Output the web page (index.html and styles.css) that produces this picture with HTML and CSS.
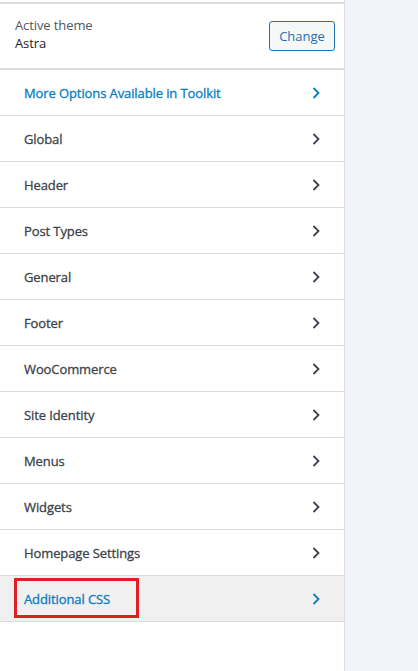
FILE: index.html
```html
<!DOCTYPE html>
<html>
<head>
<meta charset="utf-8">
<link rel="stylesheet" href="styles.css">
</head>
<body>
<div class="app">
  <aside class="sidebar">
    <div class="info">
      <div class="theme">
        <div class="label">Active theme</div>
        <div class="name">Astra</div>
      </div>
      <button class="change">Change</button>
    </div>
    <ul class="panels">
      <li class="panel link"><span>More Options Available in Toolkit</span><svg class="chev" viewBox="0 0 8 12" width="8" height="12"><polyline points="1.5,1 6.5,6 1.5,11"/></svg></li>
      <li class="panel"><span>Global</span><svg class="chev" viewBox="0 0 8 12" width="8" height="12"><polyline points="1.5,1 6.5,6 1.5,11"/></svg></li>
      <li class="panel"><span>Header</span><svg class="chev" viewBox="0 0 8 12" width="8" height="12"><polyline points="1.5,1 6.5,6 1.5,11"/></svg></li>
      <li class="panel"><span>Post Types</span><svg class="chev" viewBox="0 0 8 12" width="8" height="12"><polyline points="1.5,1 6.5,6 1.5,11"/></svg></li>
      <li class="panel"><span>General</span><svg class="chev" viewBox="0 0 8 12" width="8" height="12"><polyline points="1.5,1 6.5,6 1.5,11"/></svg></li>
      <li class="panel"><span>Footer</span><svg class="chev" viewBox="0 0 8 12" width="8" height="12"><polyline points="1.5,1 6.5,6 1.5,11"/></svg></li>
      <li class="panel"><span>WooCommerce</span><svg class="chev" viewBox="0 0 8 12" width="8" height="12"><polyline points="1.5,1 6.5,6 1.5,11"/></svg></li>
      <li class="panel"><span>Site Identity</span><svg class="chev" viewBox="0 0 8 12" width="8" height="12"><polyline points="1.5,1 6.5,6 1.5,11"/></svg></li>
      <li class="panel"><span>Menus</span><svg class="chev" viewBox="0 0 8 12" width="8" height="12"><polyline points="1.5,1 6.5,6 1.5,11"/></svg></li>
      <li class="panel"><span>Widgets</span><svg class="chev" viewBox="0 0 8 12" width="8" height="12"><polyline points="1.5,1 6.5,6 1.5,11"/></svg></li>
      <li class="panel"><span>Homepage Settings</span><svg class="chev" viewBox="0 0 8 12" width="8" height="12"><polyline points="1.5,1 6.5,6 1.5,11"/></svg></li>
      <li class="panel link active"><span>Additional CSS</span><svg class="chev" viewBox="0 0 8 12" width="8" height="12"><polyline points="1.5,1 6.5,6 1.5,11"/></svg><div class="highlight"></div></li>
    </ul>
  </aside>
  <main class="preview"></main>
</div>
</body>
</html>
```
FILE: styles.css
```css
html, body {
  margin: 0;
  padding: 0;
  background: #fff;
}
body {
  font-family: "Open Sans", "Noto Sans", sans-serif;
  font-size: 13px;
}
.app {
  display: flex;
  height: 671px;
}
.sidebar {
  width: 344px;
  border-right: 1px solid #dcdcde;
  background: #fff;
  padding-top: 2px;
  box-sizing: content-box;
}
.preview {
  flex: 1;
  background: #f0f3f7;
}
.info {
  border-top: 2px solid #dcdcde;
  border-bottom: 2px solid #dcdcde;
  height: 64px;
  box-sizing: content-box;
  display: flex;
  align-items: center;
  justify-content: space-between;
  padding: 0 9px 0 15px;
}
.theme {
  line-height: 18px;
  margin-top: -4px;
  letter-spacing: -0.1px;
}
.label {
  color: #50575e;
}
.name {
  color: #1d2327;
}
.change {
  font-family: inherit;
  font-size: 13px;
  color: #2271b1;
  background: #f6f7f7;
  border: 1px solid #2271b1;
  border-radius: 3px;
  height: 30px;
  width: 66px;
  padding: 0;
  margin-top: -1px;
}
.panels {
  list-style: none;
  margin: 0;
  padding: 0;
}
.panel {
  position: relative;
  height: 45px;
  border-bottom: 1px solid #dcdcde;
  display: flex;
  align-items: center;
  justify-content: space-between;
  padding: 0 25px 0 24px;
  color: #3c434a;
  font-size: 13px;
  font-weight: 400;
  letter-spacing: -0.1px;
  -webkit-text-stroke: 0.3px currentColor;
}
.panel span {
  margin-top: 1px;
}
.chev {
  fill: none;
  stroke: #3c434a;
  stroke-width: 1.8;
  margin-top: 1px;
  margin-right: -1px;
}
.link {
  color: #0a7bc1;
}
.link .chev {
  stroke: #0a7bc1;
}
.active {
  background: #f0f0f1;
}
.highlight {
  position: absolute;
  left: 14px;
  top: 2px;
  width: 125px;
  height: 40px;
  border: 3px solid #e01e24;
  box-sizing: border-box;
}
```
